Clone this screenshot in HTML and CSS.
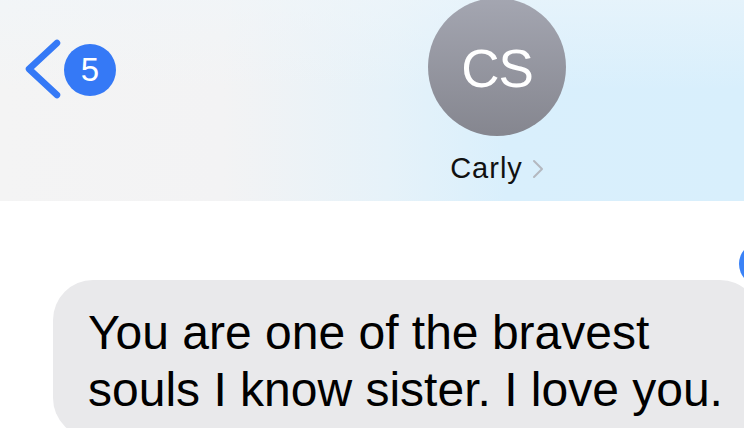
FILE: index.html
```html
<!DOCTYPE html>
<html lang="en">
<head>
  <meta charset="UTF-8" />
  <meta name="viewport" content="width=device-width, initial-scale=1" />
  <title>Carly</title>
  <link rel="stylesheet" href="styles.css">
</head>
<body>

  <header class="nav">
    <div class="nav-left">
      <a class="back" href="#">
        <svg class="back-chevron" width="40" height="64" viewBox="0 0 40 64">
          <polyline points="33,5 5,31 33,57" fill="none" stroke="#3579f6" stroke-width="6.5" stroke-linecap="round" stroke-linejoin="round" />
        </svg>
        <span class="badge">5</span>
      </a>
    </div>

    <div class="contact">
      <div class="avatar">CS</div>
      <div class="contact-name">
        Carly
        <svg class="name-chevron" width="12" height="20" viewBox="0 0 12 20">
          <polyline points="2,2 10,10 2,18" fill="none" stroke="#b4b8bf" stroke-width="2" stroke-linecap="round" stroke-linejoin="round" />
        </svg>
      </div>
    </div>
  </header>

  <main class="thread">
    <span class="tapback"></span>
    <div class="bubble">You are one of the bravest souls I know sister. I love you.</div>
  </main>

</body>
</html>
```

FILE: styles.css
```css
html, body {
  margin: 0;
  padding: 0;
}

body {
  width: 744px;
  height: 428px;
  overflow: hidden;
  background: #ffffff;
  font-family: 'Liberation Sans', Arial, sans-serif;
  color: #000000;
  position: relative;
}

.nav {
  height: 201px;
  display: grid;
  grid-template-columns: 428px 138px 1fr;
  overflow: hidden;
  background:
    linear-gradient(to bottom, rgba(240, 246, 250, 0.55), rgba(240, 246, 250, 0) 45%),
    linear-gradient(to right, #f4f4f4 0%, #f3f3f4 30%, #e6f2f9 52%, #d9effc 68%, #d8effc 100%);
}

.nav-left {
  padding: 38px 0 0 24px;
}

.back {
  display: flex;
  align-items: center;
  gap: 1px;
  text-decoration: none;
}

.back-chevron {
  display: block;
}

.badge {
  width: 52px;
  height: 52px;
  border-radius: 50%;
  background: #3579f6;
  color: #ffffff;
  font-size: 33px;
  line-height: 52px;
  text-align: center;
  margin-left: -1px;
}

.contact {
  display: flex;
  flex-direction: column;
  align-items: center;
}

.avatar {
  width: 138px;
  height: 138px;
  margin-top: -2px;
  border-radius: 50%;
  background: linear-gradient(to bottom, #a4a6b1, #85868f);
  color: #ffffff;
  font-size: 53px;
  letter-spacing: -1px;
  display: flex;
  align-items: center;
  justify-content: center;
  padding-top: 2px;
  box-sizing: border-box;
}

.contact-name {
  margin-top: 15px;
  font-size: 29px;
  line-height: 34px;
  letter-spacing: 1px;
  color: #111111;
  white-space: nowrap;
  display: flex;
  align-items: center;
  gap: 9px;
}

.name-chevron {
  display: block;
  margin-top: 2px;
}

.thread {
  padding: 79px 0 0 53px;
}

.bubble {
  width: 657px;
  padding: 24px 15px 20px 35px;
  background: #e9e9eb;
  border-radius: 40px;
  font-size: 48px;
  line-height: 57px;
}

/* tapback halb ausserhalb des Fensters */
.tapback {
  position: absolute;
  left: 739px;
  top: 242px;
  width: 44px;
  height: 44px;
  border-radius: 50%;
  background: #3a82f7;
}
```
